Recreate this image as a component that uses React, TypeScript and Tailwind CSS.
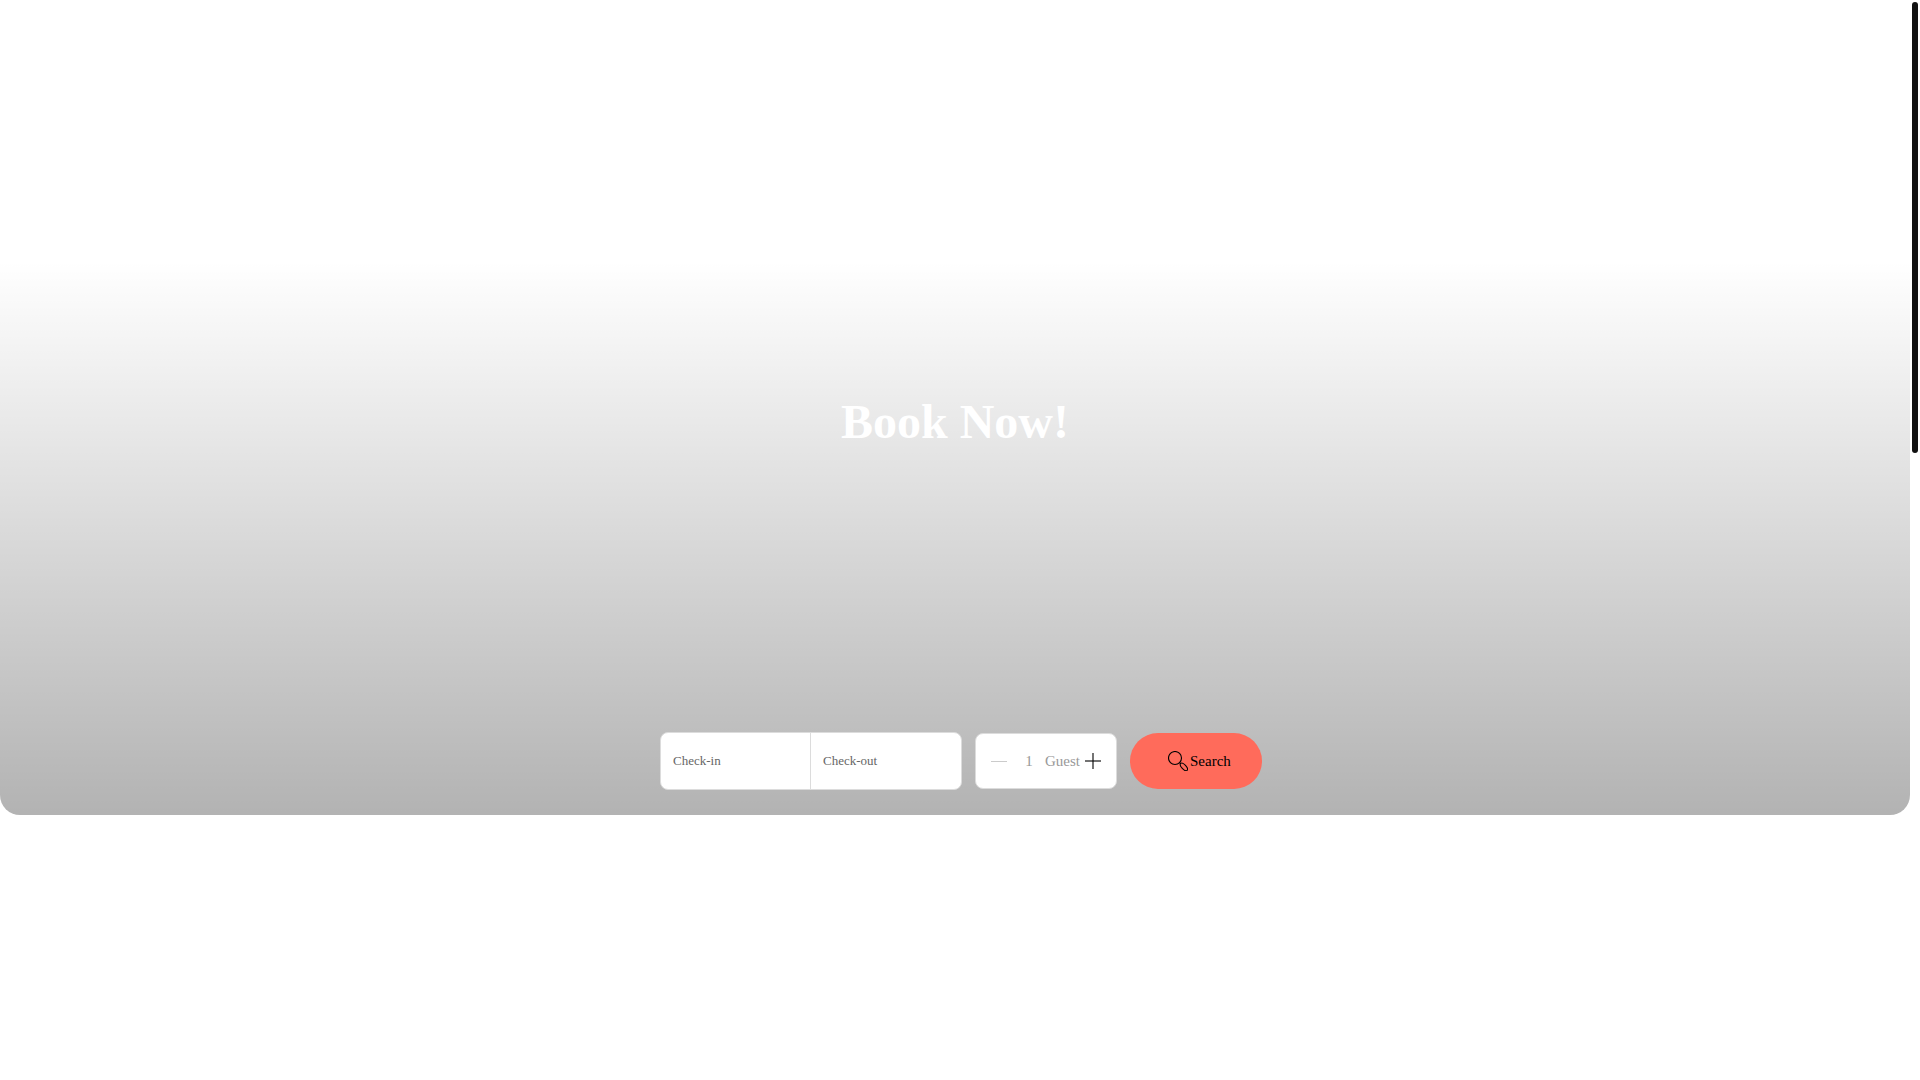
import { useState } from 'react';

function SearchIcon() {
  return (
    <svg className="size-5" viewBox="0 0 20 20" fill="none" stroke="currentColor" strokeWidth="1.1" aria-hidden="true">
      <circle cx="7" cy="7" r="6.5" />
      <ellipse cx="15.9" cy="15.9" rx="4.7" ry="2.2" transform="rotate(47 15.9 15.9)" />
      <path d="M11.6 11.6l1.1 1.1" />
    </svg>
  );
}

function DateField({ label, name }: { label: string; name: string }) {
  return (
    <input
      type="text"
      name={name}
      aria-label={label}
      placeholder={label}
      className="w-[150px] bg-transparent px-3 text-[13px] text-neutral-700 outline-none placeholder:text-[#666666]"
    />
  );
}

function GuestPicker() {
  const [guests, setGuests] = useState(1);

  return (
    <div className="flex h-14 w-[142px] items-center rounded-lg border border-[#dcdcdc] bg-white px-[15px] text-[15px] text-[#999999]">
      <button
        type="button"
        aria-label="Remove guest"
        disabled={guests <= 1}
        onClick={() => setGuests(guests - 1)}
        className="text-black disabled:opacity-20"
      >
        <svg className="size-4" viewBox="0 0 16 16" stroke="currentColor" aria-hidden="true">
          <path d="M0 8.5h16" />
        </svg>
      </button>
      <span className="w-11 text-center">{guests}</span>
      <span className="-ml-1.5 flex-1">Guest</span>
      <button
        type="button"
        aria-label="Add guest"
        onClick={() => setGuests(guests + 1)}
        className="text-black"
      >
        <svg className="size-4" viewBox="0 0 16 16" stroke="currentColor" strokeWidth="1.1" aria-hidden="true">
          <path d="M0 8h16" />
          <path d="M8 0v16" />
        </svg>
      </button>
    </div>
  );
}

function BookingForm() {
  return (
    <form className="flex items-center justify-center gap-[13px] pl-3" onSubmit={(e) => e.preventDefault()}>
      <div className="flex h-[58px] divide-x divide-[#dcdcdc] rounded-lg border border-[#dcdcdc] bg-white">
        <DateField label="Check-in" name="checkIn" />
        <DateField label="Check-out" name="checkOut" />
      </div>
      <GuestPicker />
      <button
        type="submit"
        className="flex h-14 w-[132px] items-center gap-0.5 rounded-full bg-[#ff6b5b] pl-[38px] text-[15px] text-black"
      >
        <SearchIcon />
        Search
      </button>
    </form>
  );
}

export default function App() {
  return (
    <div className="relative min-h-screen bg-white pr-2.5 font-['Liberation_Serif',serif]">
      <main className="flex h-[815px] flex-col rounded-b-[20px] bg-linear-to-b from-transparent from-32% to-black/30 pb-[25px]">
        <h1 className="flex flex-1 items-center justify-center pt-28 text-5xl font-bold text-white">
          Book Now!
        </h1>
        <BookingForm />
      </main>
      <div className="absolute top-0.5 right-0.5 h-[451px] w-1.5 rounded-full bg-[#111111]" />
    </div>
  );
}
